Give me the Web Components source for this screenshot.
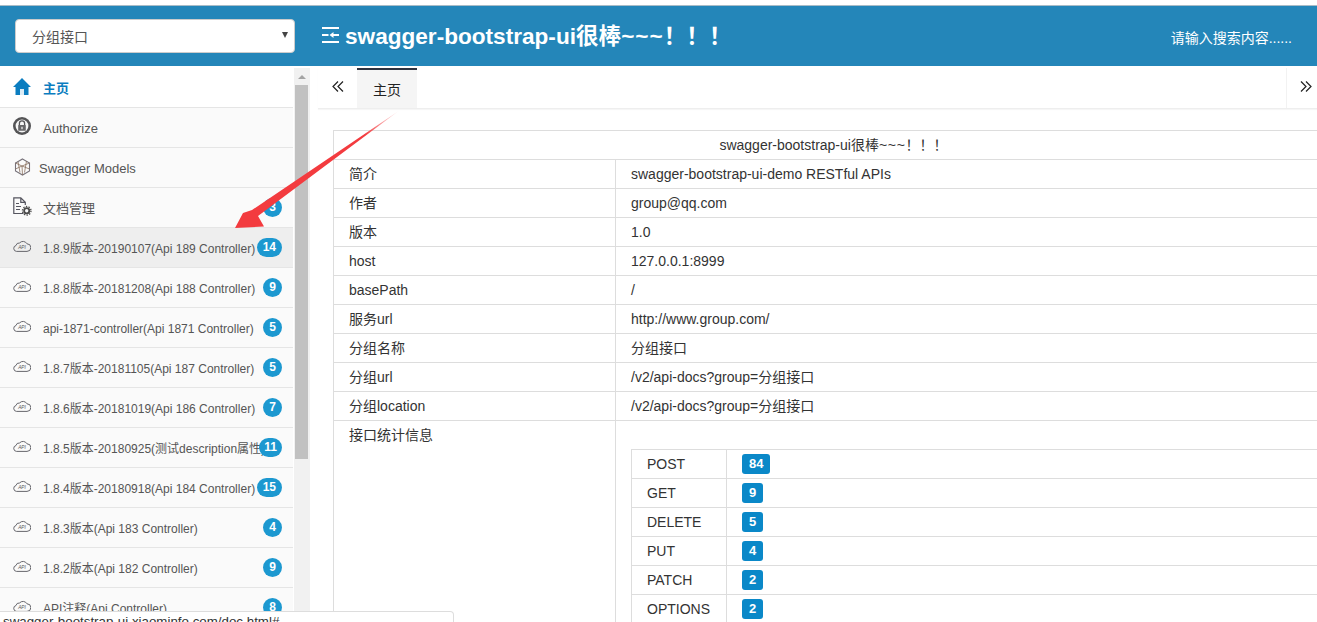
<!DOCTYPE html>
<html lang="zh">
<head>
<meta charset="utf-8">
<title>swagger-bootstrap-ui</title>
<style>
    html, body {
        margin: 0;
        height: 100%;
        overflow: hidden;
        background: #fff;
        font-family: "Liberation Sans", "Noto Sans CJK SC", sans-serif;
        color: #333;
    }
    .workspace {
        display: flex;
        height: 554px;
        margin-top: 2px;
    }
    .page-main {
        flex: 1;
        min-width: 0;
        overflow: hidden;
    }
</style>
</head>
<body>
<app-header title-text="swagger-bootstrap-ui很棒~~~！！！" search-text="请输入搜索内容......">
    <group-select slot="select">分组接口</group-select>
</app-header>

<div class="workspace">
    <side-menu>
        <menu-item icon="home" active>主页</menu-item>
        <menu-item icon="lock">Authorize</menu-item>
        <menu-item icon="cube" tight>Swagger Models</menu-item>
        <menu-item icon="file" badge="3">文档管理</menu-item>
        <menu-item icon="cloud" small selected badge="14">1.8.9版本-20190107(Api 189 Controller)</menu-item>
        <menu-item icon="cloud" small badge="9">1.8.8版本-20181208(Api 188 Controller)</menu-item>
        <menu-item icon="cloud" small badge="5">api-1871-controller(Api 1871 Controller)</menu-item>
        <menu-item icon="cloud" small badge="5">1.8.7版本-20181105(Api 187 Controller)</menu-item>
        <menu-item icon="cloud" small badge="7">1.8.6版本-20181019(Api 186 Controller)</menu-item>
        <menu-item icon="cloud" small badge="11">1.8.5版本-20180925(测试description属性)</menu-item>
        <menu-item icon="cloud" small badge="15">1.8.4版本-20180918(Api 184 Controller)</menu-item>
        <menu-item icon="cloud" small badge="4">1.8.3版本(Api 183 Controller)</menu-item>
        <menu-item icon="cloud" small badge="9">1.8.2版本(Api 182 Controller)</menu-item>
        <menu-item icon="cloud" small badge="8">API注释(Api Controller)</menu-item>
    </side-menu>

    <div class="page-main">
        <tab-bar>主页</tab-bar>
        <info-table heading="swagger-bootstrap-ui很棒~~~！！！">
            <info-row label="简介">swagger-bootstrap-ui-demo RESTful APIs</info-row>
            <info-row label="作者">group@qq.com</info-row>
            <info-row label="版本">1.0</info-row>
            <info-row label="host">127.0.0.1:8999</info-row>
            <info-row label="basePath">/</info-row>
            <info-row label="服务url">http://www.group.com/</info-row>
            <info-row label="分组名称">分组接口</info-row>
            <info-row label="分组url">/v2/api-docs?group=分组接口</info-row>
            <info-row label="分组location">/v2/api-docs?group=分组接口</info-row>
            <info-row label="接口统计信息" nested>
                <method-table>
                    <method-row name="POST" count="84"></method-row>
                    <method-row name="GET" count="9"></method-row>
                    <method-row name="DELETE" count="5"></method-row>
                    <method-row name="PUT" count="4"></method-row>
                    <method-row name="PATCH" count="2"></method-row>
                    <method-row name="OPTIONS" count="2"></method-row>
                </method-table>
            </info-row>
        </info-table>
    </div>
</div>

<annotation-arrow></annotation-arrow>
<status-bubble>swagger-bootstrap-ui.xiaominfo.com/doc.html#</status-bubble>

<script>
// Base class: every element just stamps its markup once into an open shadow root
class ShadowElement extends HTMLElement {
    connectedCallback() {
        if (!this.shadowRoot) {
            this.attachShadow({ mode: 'open' });
            this.shadowRoot.innerHTML = this.markup();
        }
    }
}

// The tildes of the project title run wider in the reference font
const wrapTildes = (text) => text.replace(/~+/, (m) => `<span class="wave">${m}</span>`);

class AppHeader extends ShadowElement {
    markup() {
        return `
            <style>
                :host {
                    display: flex;
                    align-items: center;
                    box-sizing: border-box;
                    margin-top: 5px;
                    height: 61px;
                    border-top: 1px solid #a9bcc7;
                    background: #2486b9;
                    color: #fff;
                    padding-left: 15px;
                }
                .brand {
                    display: flex;
                    align-items: center;
                    margin-left: 27px;
                    flex: 1;
                    font-size: 22.6px;
                    font-weight: bold;
                    white-space: nowrap;
                }
                .brand svg { display: block; margin: -2px 6px 0 0; }
                .brand span.name { margin-top: -4px; }
                .wave { letter-spacing: 1px; }
                .search {
                    font-size: 14px;
                    margin-right: 25px;
                    margin-top: 2px;
                }
            </style>
            <slot name="select"></slot>
            <div class="brand">
                <svg width="17" height="16" viewBox="0 0 17 16" fill="#fff">
                    <rect x="0" y="0" width="17" height="2"/>
                    <rect x="0" y="14" width="17" height="2"/>
                    <rect x="0" y="7" width="6.500" height="2"/>
                    <rect x="10" y="7" width="7" height="2"/>
                    <path d="M7.500 8l4-3v6z"/>
                </svg>
                <span class="name">${wrapTildes(this.getAttribute('title-text'))}</span>
            </div>
            <div class="search">${this.getAttribute('search-text')}</div>
        `;
    }
}

class GroupSelect extends ShadowElement {
    markup() {
        return `
            <style>
                :host {
                    display: flex;
                    align-items: center;
                    justify-content: space-between;
                    box-sizing: border-box;
                    width: 280px;
                    height: 34px;
                    padding: 0 6px 0 16px;
                    background: #fff;
                    border: 1px solid #ccc;
                    border-radius: 4px;
                    color: #555;
                    font-size: 14px;
                }
                .caret {
                    width: 0;
                    height: 0;
                    border-left: 3.5px solid transparent;
                    border-right: 3.5px solid transparent;
                    border-top: 6px solid #444;
                    margin-top: -3px;
                }
            </style>
            <slot></slot>
            <span class="caret"></span>
        `;
    }
}

class SideMenu extends ShadowElement {
    markup() {
        return `
            <style>
                :host {
                    display: flex;
                    flex: none;
                    width: 310px;
                    height: 100%;
                    overflow: hidden;
                }
                .list { width: 293px; flex: none; }
                .track {
                    display: flex;
                    flex-direction: column;
                    align-items: flex-start;
                    box-sizing: border-box;
                    width: 16px;
                    margin-left: 1px;
                    background: #f1f1f1;
                }
                .up {
                    width: 0;
                    height: 0;
                    margin: 7px 0 0 3.5px;
                    border-left: 4px solid transparent;
                    border-right: 4px solid transparent;
                    border-bottom: 4px solid #a3a3a3;
                }
                .thumb {
                    width: 13px;
                    height: 374px;
                    margin: 6px 0 0 1px;
                    background: #c1c1c1;
                }
            </style>
            <div class="list"><slot></slot></div>
            <div class="track"><span class="up"></span><span class="thumb"></span></div>
        `;
    }
}

const MENU_ICONS = {
    home: `<svg width="18" height="17" viewBox="0 0 18 17" style="margin-top:-2px">
        <path d="M9 0L18 9h-2.500v8H11v-6H7v6H2.500V9H0z" fill="#0b7dc0"/>
        <rect x="7" y="11" width="4" height="6" fill="#dcecf6"/>
    </svg>`,
    lock: `<svg width="18" height="18" viewBox="0 0 18 18" style="margin-top:-4px">
        <circle cx="9" cy="9" r="9" fill="#545456"/>
        <circle cx="9" cy="9" r="6.400" fill="#f6f6f6"/>
        <path d="M6.400 8.500V6.500a2.600 2.600 0 0 1 5.200 0v2" fill="none" stroke="#545456" stroke-width="1.300"/>
        <rect x="5.200" y="8" width="7.600" height="5.800" rx=".6" fill="#666668"/>
        <rect x="8.400" y="9.800" width="1.200" height="2.400" fill="#f6f6f6"/>
    </svg>`,
    cube: `<svg width="17" height="18" viewBox="0 0 17 18" fill="none" style="margin-left:1px;margin-top:-2px">
        <path d="M8.500 1L15.500 5v8l-7 4-7-4V5z" stroke="#77727a" stroke-width="1.100"/>
        <path d="M1.500 5L8 8l7.500-3M8 8l.5 9M4 3.500l2 11M12.500 3l-2 11.500M1.500 11L8 8l7.500 3" stroke="#8a7160" stroke-width=".8"/>
    </svg>`,
    file: `<svg width="19" height="19" viewBox="0 0 19 19" fill="none" stroke="#55555f" style="margin-top:-3px">
        <path d="M10.500 16.500H.800V.800h7l4.500 4.500v2.700M7.800 .800v4.500h4.500" stroke-width="1.200"/>
        <path d="M3 6.500h3M3 9.500h5M3 12.500h4" stroke-width="1.100"/>
        <circle cx="13.700" cy="13.800" r="2.600" stroke-width="1.800" stroke="#4a4a4a"/>
        <circle cx="13.700" cy="13.800" r="4.300" stroke-width="1.300" stroke="#4a4a4a" stroke-dasharray="1.400 1.300"/>
    </svg>`,
    cloud: `<svg width="18" height="12" viewBox="0 0 18 12" style="margin-top:-4px">
        <path d="M4 11.400H3.500A3 3 0 0 1 3 5.500 3.200 3.200 0 0 1 6.500 3 4.600 4.600 0 0 1 14 3.800 3.800 3.800 0 0 1 14 11.400z" fill="none" stroke="#66666c" stroke-width="1"/>
        <text x="9" y="9.300" text-anchor="middle" font-size="4.800" font-style="italic" font-family="Liberation Sans" fill="#55555a">API</text>
    </svg>`
};

class MenuItem extends ShadowElement {
    markup() {
        const icon = MENU_ICONS[this.getAttribute('icon')];
        const badge = this.getAttribute('badge');
        return `
            <style>
                :host {
                    display: flex;
                    align-items: center;
                    position: relative;
                    box-sizing: border-box;
                    height: 40px;
                    padding-left: 13px;
                    background: #fafafa;
                    border-bottom: 1px solid #e5e5e5;
                    color: #555;
                    font-size: 13px;
                    white-space: nowrap;
                }
                :host([small]) { font-size: 12px; }
                :host([active]) {
                    background: #fff;
                    color: #0b7dc0;
                    font-weight: bold;
                }
                :host([selected]) { background: #eee; }
                .text { line-height: 20px; padding-top: 2px; }
                .icon { display: flex; width: 30px; flex: none; }
                :host([tight]) .icon { width: 26px; }
                .badge {
                    position: absolute;
                    right: 11px;
                    top: 10px;
                    min-width: 19px;
                    height: 19px;
                    box-sizing: border-box;
                    padding: 0 3px;
                    border-radius: 10px;
                    background: #1c98d0;
                    color: #fff;
                    font-size: 12px;
                    font-weight: bold;
                    line-height: 18px;
                    text-align: center;
                }
                :host([badge="14"]) .badge, :host([badge="15"]) .badge { padding: 0 6px; }
                :host([badge="11"]) .badge { padding: 0 5px; }
            </style>
            <span class="icon">${icon}</span>
            <span class="text"><slot></slot></span>
            ${badge ? `<span class="badge">${badge}</span>` : ''}
        `;
    }
}

class TabBar extends ShadowElement {
    markup() {
        return `
            <style>
                :host {
                    display: flex;
                    box-sizing: border-box;
                    height: 41px;
                    margin-left: 8px;
                    border-bottom: 1px solid #eee;
                    box-shadow: 0 1px 1px #f6f6f6;
                    color: #222;
                    font-size: 14px;
                }
                .nav {
                    display: flex;
                    align-items: center;
                    justify-content: center;
                    flex: none;
                    width: 39px;
                    padding-bottom: 4px;
                    box-sizing: border-box;
                }
                .tab {
                    display: flex;
                    align-items: center;
                    justify-content: center;
                    flex: none;
                    box-sizing: border-box;
                    width: 60px;
                    background: #f5f5f5;
                    border-top: 2px solid #2f3340;
                }
                .spacer { flex: 1; }
                .nav.right { width: 31px; border-left: 1px solid #f2f2f2; padding-left: 7px; }
                svg { display: block; }
            </style>
            <div class="nav">
                <svg width="12" height="11" viewBox="0 0 12 11" fill="none" stroke="#222" stroke-width="1.200"><path d="M6 .500L1 5.500l5 5M11 .500L6 5.500l5 5"/></svg>
            </div>
            <div class="tab"><slot></slot></div>
            <div class="spacer"></div>
            <div class="nav right">
                <svg width="12" height="11" viewBox="0 0 12 11" fill="none" stroke="#222" stroke-width="1.200"><path d="M1 .500l5 5-5 5M6 .500l5 5-5 5"/></svg>
            </div>
        `;
    }
}

class InfoTable extends ShadowElement {
    markup() {
        return `
            <style>
                :host {
                    display: block;
                    box-sizing: border-box;
                    width: 1001px;
                    margin: 21px 0 0 23px;
                    border: 1px solid #ddd;
                    border-bottom: 0;
                    color: #333;
                    font-size: 14px;
                }
                .heading {
                    height: 29px;
                    box-sizing: border-box;
                    border-bottom: 1px solid #ddd;
                    line-height: 28px;
                    text-align: center;
                }
                .wave { letter-spacing: .7px; }
            </style>
            <div class="heading">${wrapTildes(this.getAttribute('heading'))}</div>
            <slot></slot>
        `;
    }
}

class InfoRow extends ShadowElement {
    markup() {
        return `
            <style>
                :host {
                    display: grid;
                    grid-template-columns: 282px 1fr;
                    min-height: 29px;
                    box-sizing: border-box;
                    border-bottom: 1px solid #ddd;
                    line-height: 28px;
                }
                .label { padding-left: 15px; border-right: 1px solid #ddd; }
                .value { padding-left: 15px; }
                :host([nested]) .value { padding: 28px 0 0 15px; }
            </style>
            <div class="label">${this.getAttribute('label')}</div>
            <div class="value"><slot></slot></div>
        `;
    }
}

class MethodTable extends ShadowElement {
    markup() {
        return `
            <style>
                :host {
                    display: block;
                    box-sizing: border-box;
                    width: 690px;
                    border: 1px solid #ddd;
                    border-bottom: 0;
                }
            </style>
            <slot></slot>
        `;
    }
}

class MethodRow extends ShadowElement {
    markup() {
        return `
            <style>
                :host {
                    display: grid;
                    grid-template-columns: 95px 1fr;
                    height: 29px;
                    box-sizing: border-box;
                    border-bottom: 1px solid #ddd;
                    line-height: 28px;
                }
                .name { padding-left: 15px; border-right: 1px solid #ddd; }
                .count { display: flex; align-items: center; padding-left: 15px; }
                .label {
                    min-width: 21px;
                    height: 20px;
                    box-sizing: border-box;
                    padding: 0 7px;
                    border-radius: 3px;
                    background: #0a88c8;
                    color: #fff;
                    font-size: 13px;
                    font-weight: bold;
                    line-height: 19px;
                    text-align: center;
                }
            </style>
            <div class="name">${this.getAttribute('name')}</div>
            <div class="count"><span class="label">${this.getAttribute('count')}</span></div>
        `;
    }
}

// Hand drawn annotation that lies over the sidebar and the content
class AnnotationArrow extends ShadowElement {
    markup() {
        return `
            <style>
                :host {
                    position: absolute;
                    left: 225px;
                    top: 105px;
                    width: 180px;
                    height: 130px;
                    pointer-events: none;
                }
            </style>
            <svg width="180" height="130" viewBox="0 0 180 130">
                <defs>
                    <linearGradient id="fade" gradientUnits="userSpaceOnUse" x1="175" y1="5" x2="140" y2="30">
                        <stop offset="0" stop-color="#f33b3f" stop-opacity="0"/>
                        <stop offset="1" stop-color="#f33b3f"/>
                    </linearGradient>
                </defs>
                <path d="M175 5L27 105 18 108 10 123 39 121.500 33 111z" fill="url(#fade)"/>
            </svg>
        `;
    }
}

class StatusBubble extends ShadowElement {
    markup() {
        return `
            <style>
                :host {
                    position: absolute;
                    left: 0;
                    top: 611px;
                    box-sizing: border-box;
                    width: 454px;
                    height: 20px;
                    padding: 1px 0 0 3px;
                    background: #fff;
                    border: 1px solid #ddd;
                    border-left: 0;
                    border-top-right-radius: 4px;
                    color: #333;
                    font-size: 13.330px;
                    line-height: 18px;
                    white-space: nowrap;
                }
            </style>
            <slot></slot>
        `;
    }
}

customElements.define('app-header', AppHeader);
customElements.define('group-select', GroupSelect);
customElements.define('side-menu', SideMenu);
customElements.define('menu-item', MenuItem);
customElements.define('tab-bar', TabBar);
customElements.define('info-table', InfoTable);
customElements.define('info-row', InfoRow);
customElements.define('method-table', MethodTable);
customElements.define('method-row', MethodRow);
customElements.define('annotation-arrow', AnnotationArrow);
customElements.define('status-bubble', StatusBubble);
</script>
</body>
</html>
